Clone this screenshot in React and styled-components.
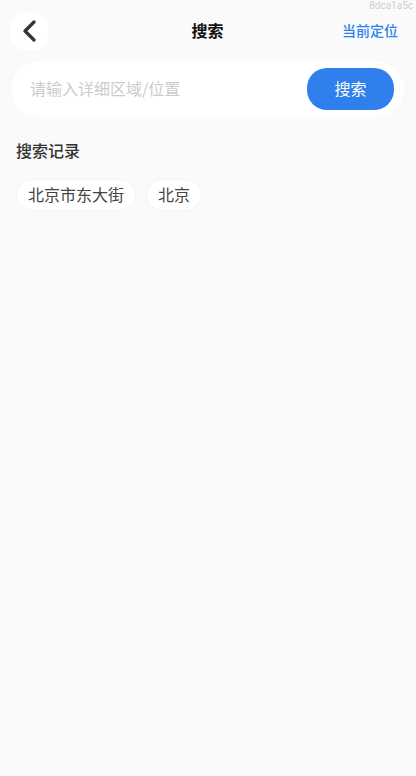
import { useState } from "react";
import styled, { createGlobalStyle } from "styled-components";

const GlobalStyle = createGlobalStyle`
  * {
    box-sizing: border-box;
  }

  body {
    margin: 0;
    background-color: #fafafa;
    font-family: "Noto Sans CJK SC", sans-serif;
    color: #333;
  }

  button,
  input {
    font-family: inherit;
  }
`;

const Container = styled.div`
  position: relative;
  min-height: 100vh;
  padding: 12px 12px 24px 11px;
`;

const BuildTag = styled.span`
  position: absolute;
  top: 0;
  right: 3px;
  font-family: Roboto, sans-serif;
  font-size: 10px;
  line-height: 12px;
  color: #d0d0d0;
`;

const Header = styled.header`
  display: grid;
  grid-template-columns: 1fr auto 1fr;
  align-items: center;
`;

const BackButton = styled.button`
  display: flex;
  align-items: center;
  justify-content: center;
  width: 37px;
  height: 38px;
  padding: 0;
  border: none;
  border-radius: 14px;
  background-color: white;
  cursor: pointer;
`;

const Title = styled.h1`
  margin: 0;
  padding-bottom: 2px;
  font-size: 16px;
  font-weight: 700;
  line-height: 24px;
  color: #111;
`;

const LocationLink = styled.a`
  justify-self: end;
  margin-right: 6px;
  padding-bottom: 2px;
  font-size: 14px;
  font-weight: 500;
  line-height: 24px;
  color: #2b7ff0;
  text-decoration: none;
`;

const SearchForm = styled.form`
  display: flex;
  align-items: center;
  height: 56px;
  margin-top: 11px;
  padding: 0 10px 0 19px;
  border-radius: 28px;
  background-color: white;
`;

const SearchInput = styled.input`
  flex: 1;
  min-width: 0;
  height: 42px;
  padding: 0 0 2px;
  border: none;
  outline: none;
  background: transparent;
  font-size: 16px;
  color: #333;

  &::placeholder {
    color: #ccc;
    opacity: 1;
  }
`;

const SearchButton = styled.button`
  width: 87px;
  height: 42px;
  padding: 0 0 2px;
  border: none;
  border-radius: 20px;
  background-color: #2f80ed;
  font-size: 16px;
  color: white;
  cursor: pointer;
`;

const History = styled.section`
  padding: 0 5px;
`;

const HistoryTitle = styled.h2`
  margin: 21px 0 17px;
  font-size: 16px;
  font-weight: 500;
  line-height: 24px;
`;

const HistoryList = styled.div`
  display: flex;
  flex-wrap: wrap;
  gap: 10px;
`;

const HistoryItem = styled.button`
  height: 32px;
  padding: 0 11px 2px;
  border: 1px solid #f4f4f4;
  border-radius: 16px;
  background-color: white;
  font-size: 16px;
  color: #444;
  cursor: pointer;
`;

const records = ["北京市东大街", "北京"];

const App = () => {
  const [keyword, setKeyword] = useState("");

  return (
    <Container>
      <GlobalStyle />
      <BuildTag>8dca1a5c</BuildTag>
      <Header>
        <BackButton type="button" aria-label="返回">
          <svg width="13" height="22" viewBox="0 0 13 22" fill="none">
            <path
              d="M11 2L2 11L11 20"
              stroke="#333"
              strokeWidth="3.2"
              strokeLinecap="round"
              strokeLinejoin="round"
            />
          </svg>
        </BackButton>
        <Title>搜索</Title>
        <LocationLink href="#location">当前定位</LocationLink>
      </Header>
      <SearchForm onSubmit={(e) => e.preventDefault()}>
        <SearchInput
          aria-label="请输入详细区域/位置"
          placeholder="请输入详细区域/位置"
          value={keyword}
          onChange={(e) => setKeyword(e.target.value)}
        />
        <SearchButton type="submit">搜索</SearchButton>
      </SearchForm>
      <History>
        <HistoryTitle>搜索记录</HistoryTitle>
        <HistoryList>
          {records.map((record) => (
            <HistoryItem
              key={record}
              type="button"
              onClick={() => setKeyword(record)}
            >
              {record}
            </HistoryItem>
          ))}
        </HistoryList>
      </History>
    </Container>
  );
};

export default App;
